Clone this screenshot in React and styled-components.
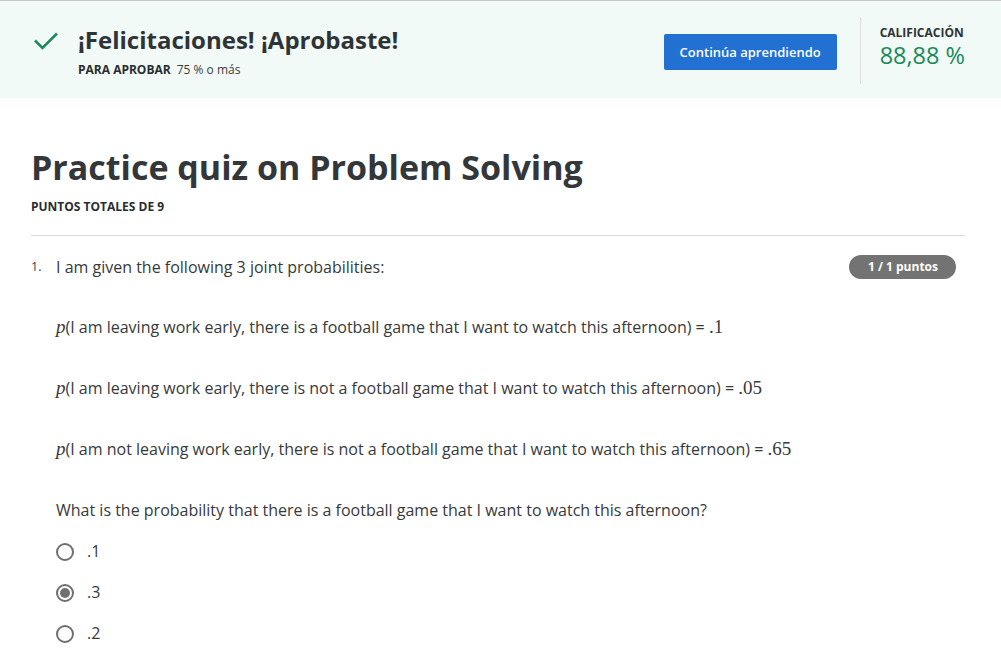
import React from 'react'
import styled, { createGlobalStyle } from 'styled-components'

const GlobalStyle = createGlobalStyle`
  html, body {
    margin: 0;
    padding: 0;
    background: #fff;
    font-family: "Open Sans", "Noto Sans", sans-serif;
    color: #373a3c;
  }
`

const Page = styled.div`
  width: 1001px;
  border-top: 1px solid #c8c8c8;
`

const Banner = styled.div`
  height: 97px;
  background: #f1faf7;
  display: flex;
  align-items: center;
  padding: 0 36px 0 32px;
  box-sizing: border-box;
`

const CheckMark = styled.svg`
  width: 28px;
  height: 28px;
  flex: none;
  margin-top: -19px;
`

const BannerText = styled.div`
  margin-left: 18px;
  flex: 1;
  margin-top: 4px;
`

const BannerTitle = styled.div`
  font-size: 24px;
  font-weight: 700;
  line-height: 30px;
  color: #303336;
`

const PassLine = styled.div`
  margin-top: 7px;
  font-size: 12px;
  line-height: 16px;
  color: #3c3c3c;

  b {
    font-weight: 700;
    margin-right: 6px;
    color: #2a2d30;
  }
`

const PrimaryButton = styled.button`
  width: 173px;
  height: 36px;
  border: none;
  border-radius: 2px;
  background: #2170d2;
  color: #fff;
  font-family: inherit;
  font-size: 13px;
  font-weight: 600;
  margin-right: 23px;
  margin-top: 4px;
  cursor: pointer;
`

const GradeBox = styled.div`
  align-self: stretch;
  margin: 16px 0 14px;
  border-left: 1px solid #dedede;
  padding-left: 19px;
  display: flex;
  flex-direction: column;
  justify-content: center;
`

const GradeLabel = styled.div`
  font-size: 12px;
  font-weight: 700;
  color: #303336;
  line-height: 16px;
  margin-top: -8px;
`

const GradeValue = styled.div`
  font-size: 23.5px;
  color: #1a8a5a;
  line-height: 28px;
`

const Content = styled.div`
  padding: 0 36px 0 31px;
`

const QuizTitle = styled.h1`
  margin: 47px 0 0;
  font-size: 34px;
  font-weight: 700;
  line-height: 44px;
  color: #34373a;
`

const TotalPoints = styled.div`
  margin-top: 10px;
  font-size: 12px;
  font-weight: 700;
  line-height: 16px;
  color: #2a2d30;
`

const Divider = styled.hr`
  margin: 20px 0 0;
  border: none;
  border-top: 1px solid #dcdcdc;
`

const Question = styled.div`
  display: flex;
  margin-top: 19px;
`

const QNumber = styled.div`
  width: 25px;
  flex: none;
  font-size: 12.5px;
  line-height: 24px;
  color: #3c3c3c;
`

const QBody = styled.div`
  flex: 1;
  font-size: 16px;
  line-height: 24px;
  color: #373a3c;
`

const QHead = styled.div`
  display: flex;
  justify-content: space-between;
  align-items: center;
`

const Badge = styled.span`
  background: #737373;
  color: #fff;
  font-size: 12px;
  font-weight: 700;
  line-height: 24px;
  padding: 0 18px 0 19px;
  border-radius: 12px;
  margin-right: 9px;
`

const Para = styled.p`
  margin: ${(p) => (p.first ? '36px' : '37px')} 0 0;
`

const Math = styled.span`
  font-family: "Liberation Serif", "DejaVu Serif", serif;
  font-size: 19px;
  font-style: ${(p) => (p.italic ? 'italic' : 'normal')};
`

const Options = styled.div`
  margin-top: 18px;
  display: flex;
  flex-direction: column;
  gap: 18px;
`

const Option = styled.label`
  display: flex;
  align-items: center;
  gap: 13px;
  line-height: 23px;
`

const Radio = styled.span`
  width: 18px;
  height: 18px;
  box-sizing: border-box;
  border: 2px solid #707070;
  border-radius: 50%;
  display: flex;
  align-items: center;
  justify-content: center;

  &::after {
    content: '';
    width: 10px;
    height: 10px;
    border-radius: 50%;
    background: #707070;
    display: ${(p) => (p.checked ? 'block' : 'none')};
  }
`

const probs = [
  { text: 'I am leaving work early, there is a football game that I want to watch this afternoon', value: '.1' },
  { text: 'I am leaving work early, there is not a football game that I want to watch this afternoon', value: '.05' },
  { text: 'I am not leaving work early, there is not a football game that I want to watch this afternoon', value: '.65' },
]

const options = [
  { label: '.1' },
  { label: '.3', checked: true },
  { label: '.2' },
]

export default function App() {
  return (
    <Page>
      <GlobalStyle />
      <Banner>
        <CheckMark viewBox="0 0 28 28">
          <path d="M3 14.5l7.5 7.5L25 7.5" fill="none" stroke="#1f8a5b" strokeWidth="2.6" />
        </CheckMark>
        <BannerText>
          <BannerTitle>¡Felicitaciones! ¡Aprobaste!</BannerTitle>
          <PassLine>
            <b>PARA APROBAR</b>75 % o más
          </PassLine>
        </BannerText>
        <PrimaryButton>Continúa aprendiendo</PrimaryButton>
        <GradeBox>
          <GradeLabel>CALIFICACIÓN</GradeLabel>
          <GradeValue>88,88 %</GradeValue>
        </GradeBox>
      </Banner>
      <Content>
        <QuizTitle>Practice quiz on Problem Solving</QuizTitle>
        <TotalPoints>PUNTOS TOTALES DE 9</TotalPoints>
        <Divider />
        <Question>
          <QNumber>1.</QNumber>
          <QBody>
            <QHead>
              <span>I am given the following 3 joint probabilities:</span>
              <Badge>1 / 1 puntos</Badge>
            </QHead>
            {probs.map((p, i) => (
              <Para key={i} first={i === 0}>
                <Math italic>p</Math>({p.text}) = <Math>{p.value}</Math>
              </Para>
            ))}
            <Para>What is the probability that there is a football game that I want to watch this afternoon?</Para>
            <Options>
              {options.map((o, i) => (
                <Option key={i}>
                  <Radio checked={o.checked} />
                  {o.label}
                </Option>
              ))}
            </Options>
          </QBody>
        </Question>
      </Content>
    </Page>
  )
}
